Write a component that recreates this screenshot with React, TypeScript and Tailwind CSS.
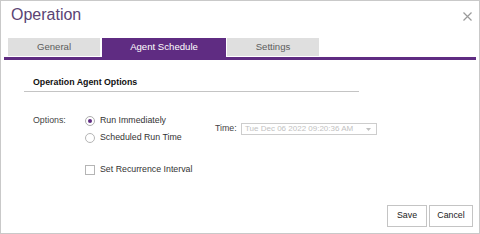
import React from 'react';

const tabs = [
  { label: 'General', cls: 'w-[92px]' },
  { label: 'Agent Schedule', cls: 'w-[124px] ml-[2px]' },
  { label: 'Settings', cls: 'w-[92px] ml-[1px]' },
];

const App: React.FC = () => {
  const active = 'Agent Schedule';

  return (
    <div className="w-[480px] h-[234px] bg-white border border-[#c9c9c9] flex flex-col font-[Liberation_Sans,Arial,sans-serif] text-[8.8px] text-[#333]">
      <div className="flex items-start justify-between pl-[10px] pr-[7px] pt-[3px] h-[37px]">
        <h1 className="text-[16px] leading-[21px] text-[#5b4474]">Operation</h1>
        <button className="mt-[8px] text-[#9a9a9a]">
          <svg width="9" height="9" viewBox="0 0 9 9" stroke="currentColor" strokeWidth="1.2">
            <path d="M0.5 0.5L8.5 8.5M8.5 0.5L0.5 8.5" />
          </svg>
        </button>
      </div>

      {/* tab strip */}
      <div className="mx-[3px] border-b-[3px] border-[#5f2c82] flex items-start pl-[4px] pb-[1px]">
        {tabs.map((t) => (
          <div
            key={t.label}
            className={
              t.label === active
                ? `${t.cls} h-[19px] -mb-[1px] bg-[#5f2c82] text-white text-[9.6px] leading-[18px] text-center`
                : `${t.cls} h-[18px] bg-[#dfdfdf] text-[#5c5c5c] text-[9.6px] leading-[18px] text-center`
            }
          >
            {t.label}
          </div>
        ))}
      </div>

      <div className="flex-1 flex flex-col">
        <div className="ml-[23px] w-[335px] mt-[17px] border-b border-[#c4c4c4] pl-[9px] pb-[3px] font-bold text-[#111] leading-[11px]">
          Operation Agent Options
        </div>

        <div className="flex ml-[32px] mt-[20px]">
          <div className="w-[52px] h-[17px] flex items-center text-[#444]">Options:</div>
          <div className="w-[130px] flex flex-col">
            <label className="flex items-center gap-[5px] h-[17px]">
              <span className="w-[10px] h-[10px] rounded-full border border-[#adadad] flex items-center justify-center">
                <span className="w-[4px] h-[4px] rounded-full bg-[#5f2c82]" />
              </span>
              <span>Run Immediately</span>
            </label>
            <label className="flex items-center gap-[5px] h-[17px]">
              <span className="w-[10px] h-[10px] rounded-full border border-[#b5b5b5]" />
              <span>Scheduled Run Time</span>
            </label>
            <label className="flex items-center gap-[5px] h-[17px] mt-[15px]">
              <span className="w-[10px] h-[10px] border border-[#b5b5b5]" />
              <span>Set Recurrence Interval</span>
            </label>
          </div>
          <div className="flex items-center mt-[11px] h-[12px]">
            <span className="text-[#444] w-[26px]">Time:</span>
            <div className="w-[136px] h-[12px] border border-[#cdcdcd] flex items-center justify-between pl-[3px] pr-[5px]">
              <span className="text-[8px] text-[#c2c2c2] leading-[10px]">Tue Dec 06 2022 09:20:36 AM</span>
              <svg width="5" height="3" viewBox="0 0 5 3" fill="#c0c0c0">
                <path d="M0 0H5L2.5 3Z" />
              </svg>
            </div>
          </div>
        </div>

        <div className="mt-auto flex justify-end gap-[2px] pr-[6px] pb-[6px]">
          <button className="w-[40px] h-[22px] border border-[#c4c4c4] bg-white text-[#222]">Save</button>
          <button className="w-[44px] h-[22px] border border-[#c4c4c4] bg-white text-[#222]">Cancel</button>
        </div>
      </div>
    </div>
  );
};

export default App;
